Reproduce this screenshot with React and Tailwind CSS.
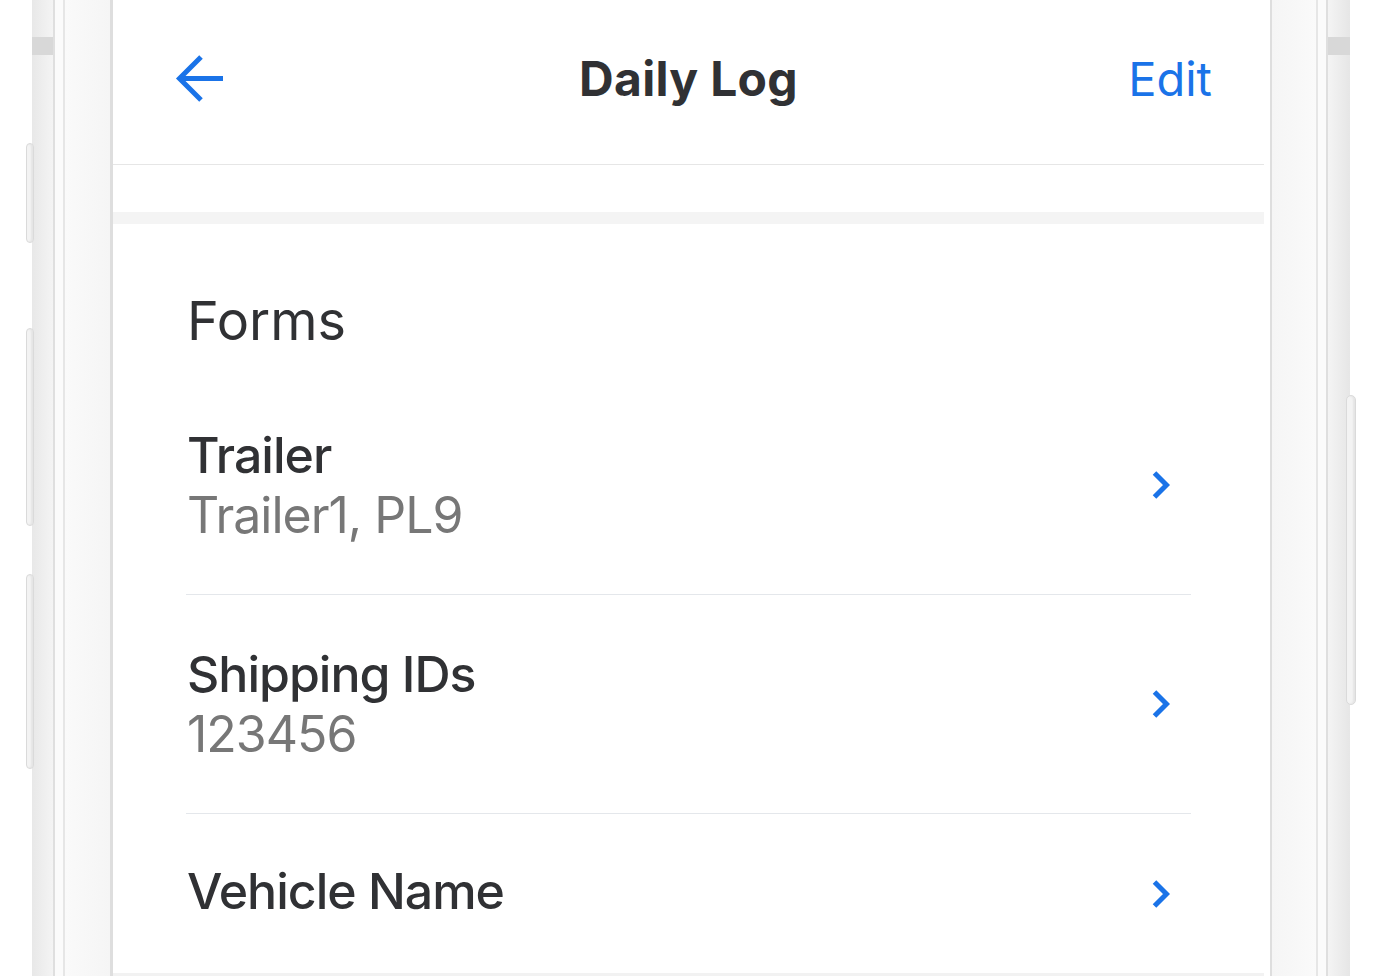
import React from "react";

function Chevron() {
  return (
    <svg width="18" height="30" viewBox="0 0 18 30" fill="none" className="shrink-0">
      <path d="M2.5 3 L14.5 15 L2.5 27" stroke="#1a73e8" strokeWidth="5" strokeLinejoin="miter" />
    </svg>
  );
}

function BackArrow() {
  return (
    <svg width="48" height="49" viewBox="0 0 48 49" fill="none">
      <path d="M48 24.5 H5" stroke="#1a73e8" strokeWidth="5" />
      <path d="M26 3 L4.5 24.5 L26 46" stroke="#1a73e8" strokeWidth="5" strokeLinejoin="miter" />
    </svg>
  );
}

function SideButton({ className }) {
  return <div className={"rounded-[5px] bg-[#f3f3f3] border border-[#dadada] shadow-[inset_-2px_0_2px_rgba(0,0,0,0.06)] " + className} />;
}

function FormRow({ title, value, last }) {
  return (
    <div className={"flex items-center justify-between pr-[21px] " + (last ? "h-[159px]" : "h-[219px] border-b border-[#e4e7eb]")}>
      <div className={"flex flex-col pl-[1px] " + (last ? "pb-[5px]" : "")}>
        <span className="text-[50px] leading-[60px] font-medium tracking-[-1px] text-[#303134]">{title}</span>
        {value && <span className="text-[50px] leading-[60px] tracking-[-1px] text-[#777777]">{value}</span>}
      </div>
      <Chevron />
    </div>
  );
}

export default function App() {
  return (
    <div className="w-[1388px] h-[976px] overflow-hidden bg-white flex font-['Inter',sans-serif]">
      {/* left side buttons */}
      <div className="w-[26px] shrink-0" />
      <div className="w-[8px] -mr-[2px] shrink-0 flex flex-col relative z-10">
        <SideButton className="mt-[143px] h-[100px]" />
        <SideButton className="mt-[85px] h-[198px]" />
        <SideButton className="mt-[48px] h-[195px]" />
      </div>

      {/* left frame */}
      <div className="w-[21px] shrink-0 bg-gradient-to-r from-[#e8e8e8] to-[#f4f4f4] flex flex-col">
        <div className="mt-[37px] h-[18px] bg-[#d8d8d8]" />
      </div>
      <div className="w-[2px] shrink-0 bg-[#dfdfdf]" />
      <div className="w-[8px] shrink-0 bg-[#fbfbfb]" />
      <div className="w-[2px] shrink-0 bg-[#e6e6e6]" />
      <div className="w-[45px] shrink-0 bg-gradient-to-r from-[#fafafa] to-[#f5f5f5]" />
      <div className="w-[3px] shrink-0 bg-[#dedede]" />

      {/* screen */}
      <div className="w-[1157px] shrink-0 bg-white flex flex-col">
        <div className="w-[1151px] flex flex-col">
          <header className="h-[165px] border-b border-[#e6e6e6] grid grid-cols-[1fr_auto_1fr] items-center pb-[7px] px-[52px]">
            <div className="flex items-center pl-[10px]">
              <BackArrow />
            </div>
            <h1 className="text-[48px] font-bold text-[#303134] leading-none tracking-[0.3px]">Daily Log</h1>
            <div className="flex justify-end">
              <span className="text-[47px] text-[#1a73e8] leading-none">Edit</span>
            </div>
          </header>
          <div className="h-[47px]" />
          <div className="h-[12px] bg-[#f4f4f4]" />

          <section className="flex flex-col pt-[67px] px-[73px]">
            <h2 className="text-[54px] leading-[60px] text-[#303134] pl-[1px]">Forms</h2>
            <div className="mt-[25px] flex flex-col">
              <FormRow title="Trailer" value="Trailer1, PL9" />
              <FormRow title="Shipping IDs" value="123456" />
              <FormRow title="Vehicle Name" last />
            </div>
          </section>
          <div className="h-[4px] bg-[#f2f2f2]" />
        </div>
      </div>

      {/* right frame */}
      <div className="w-[2px] shrink-0 bg-[#dedede]" />
      <div className="w-[44px] shrink-0 bg-gradient-to-r from-[#f5f5f5] to-[#fafafa]" />
      <div className="w-[2px] shrink-0 bg-[#e6e6e6]" />
      <div className="w-[8px] shrink-0 bg-[#fbfbfb]" />
      <div className="w-[2px] shrink-0 bg-[#dfdfdf]" />
      <div className="w-[22px] shrink-0 bg-gradient-to-r from-[#f4f4f4] to-[#e6e6e6] flex flex-col">
        <div className="mt-[37px] h-[18px] bg-[#d8d8d8]" />
      </div>
      <div className="w-[10px] -ml-[4px] shrink-0 flex flex-col relative z-10">
        <SideButton className="mt-[395px] h-[310px]" />
      </div>
    </div>
  );
}
